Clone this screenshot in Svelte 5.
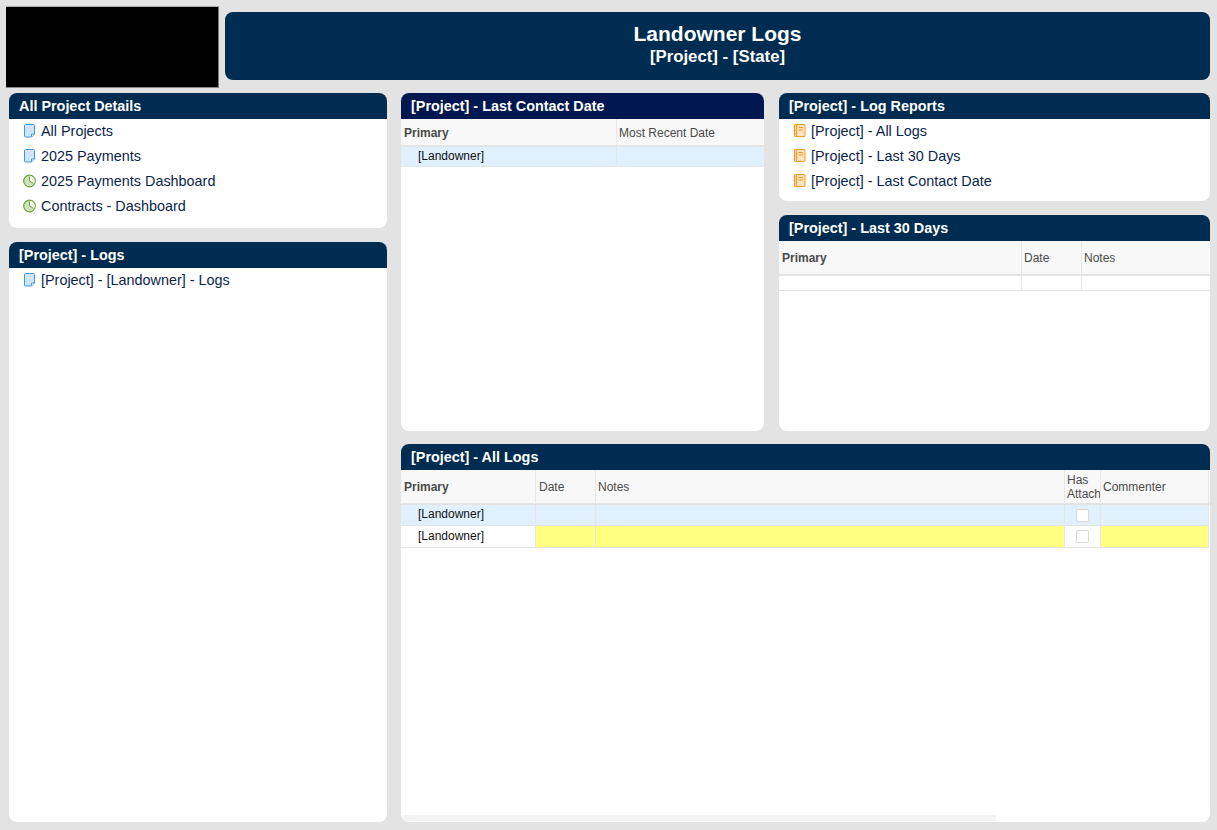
<script lang="ts">
	const details = [
		{ label: 'All Projects', icon: 'doc' },
		{ label: '2025 Payments', icon: 'doc' },
		{ label: '2025 Payments Dashboard', icon: 'pie' },
		{ label: 'Contracts - Dashboard', icon: 'pie' }
	];
	const logs = [{ label: '[Project] - [Landowner] - Logs', icon: 'doc' }];
	const reports = [
		{ label: '[Project] - All Logs', icon: 'book' },
		{ label: '[Project] - Last 30 Days', icon: 'book' },
		{ label: '[Project] - Last Contact Date', icon: 'book' }
	];
</script>

{#snippet icon(kind: string)}
	{#if kind === 'doc'}
		<svg class="ico" viewBox="0 0 14 14" width="14" height="14">
			<path d="M2.5 0.5h8a1 1 0 0 1 1 1v8.500l-3 3h-6a1 1 0 0 1-1-1v-10.500a1 1 0 0 1 1-1z" fill="#cfe6fa" stroke="#3f98de" />
			<path d="M8.500 12.500v-2.500h3" fill="#fff" stroke="#3f98de" />
		</svg>
	{:else if kind === 'pie'}
		<svg class="ico" viewBox="0 0 14 14" width="14" height="14">
			<circle cx="6.500" cy="7" r="5.800" fill="#cfe2bb" stroke="#6ea13a" stroke-width="1.200" />
			<path d="M6.500 7V1.800A5.200 5.200 0 0 1 11 9.600z" fill="#f3f8ec" />
			<path d="M6.500 2.500V7l3.800 2.200" fill="none" stroke="#6ea13a" />
		</svg>
	{:else}
		<svg class="ico" viewBox="0 0 14 14" width="14" height="14">
			<rect x="1.500" y="0.500" width="10.500" height="12" rx="0.500" fill="#fde3bf" stroke="#f59b25" />
			<path d="M3.500 0.500v12M0.500 3h2M0.500 6.500h2M0.500 10h2M5.500 3.500h4.500M5.500 6h4.500" fill="none" stroke="#f59b25" />
		</svg>
	{/if}
{/snippet}

{#snippet links(items: { label: string; icon: string }[])}
	<ul class="links">
		{#each items as item}
			<li>{@render icon(item.icon)}<span>{item.label}</span></li>
		{/each}
	</ul>
{/snippet}

<div class="page">
	<div class="top">
		<div class="logo"></div>
		<header class="banner">
			<h1>Landowner Logs</h1>
			<h2>[Project] - [State]</h2>
		</header>
	</div>

	<div class="main">
		<div class="left">
			<section class="panel details">
				<h3>All Project Details</h3>
				{@render links(details)}
			</section>
			<section class="panel fill">
				<h3>[Project] - Logs</h3>
				{@render links(logs)}
			</section>
		</div>

		<div class="right">
			<section class="panel contact">
				<h3 class="navy">[Project] - Last Contact Date</h3>
				<table class="contact-grid">
					<colgroup><col style="width:216px" /><col /></colgroup>
					<thead>
						<tr class="h28"><th class="primary">Primary</th><th>Most Recent Date</th></tr>
					</thead>
					<tbody>
						<tr class="sel"><td class="owner">[Landowner]</td><td></td></tr>
					</tbody>
				</table>
			</section>

			<div class="stack">
				<section class="panel reports">
					<h3>[Project] - Log Reports</h3>
					{@render links(reports)}
				</section>
				<section class="panel fill">
					<h3>[Project] - Last 30 Days</h3>
					<table class="days-grid">
						<colgroup><col style="width:243px" /><col style="width:60px" /><col /></colgroup>
						<thead>
							<tr class="h35"><th class="primary">Primary</th><th>Date</th><th>Notes</th></tr>
						</thead>
						<tbody>
							<tr class="blank"><td></td><td></td><td></td></tr>
						</tbody>
					</table>
				</section>
			</div>

			<section class="panel all-logs">
				<h3>[Project] - All Logs</h3>
				<table class="logs-grid">
					<colgroup>
						<col style="width:135px" /><col style="width:60px" /><col style="width:469px" /><col style="width:36px" /><col style="width:108px" /><col />
					</colgroup>
					<thead>
						<tr class="h35">
							<th class="primary">Primary</th><th class="date">Date</th><th>Notes</th><th>Has Attach</th><th>Commenter</th><th></th>
						</tr>
					</thead>
					<tbody>
						<tr class="sel r21">
							<td class="owner">[Landowner]</td><td></td><td></td><td class="check"><span class="box"></span></td><td></td><td class="none"></td>
						</tr>
						<tr class="r22">
							<td class="owner">[Landowner]</td><td class="warn"></td><td class="warn"></td><td class="check"><span class="box"></span></td><td class="warn"></td><td class="none"></td>
						</tr>
					</tbody>
				</table>
				<div class="scrollbar"></div>
			</section>
		</div>
	</div>
</div>

<style>
	:global(body) {
		background: #e3e3e3;
		font-family: 'Liberation Sans', Arial, sans-serif;
	}
	.page {
		height: 830px;
		box-sizing: border-box;
		padding: 6px 7px 8px 6px;
		display: flex;
		flex-direction: column;
		gap: 5px;
		overflow: hidden;
	}
	.top {
		display: flex;
		gap: 6px;
		height: 82px;
		flex-shrink: 0;
	}
	.logo {
		width: 213px;
		box-sizing: border-box;
		background: #000;
		border-top: 1px solid #aaa;
		border-right: 1px solid #777;
		border-bottom: 1px solid #888;
	}
	.banner {
		flex: 1;
		margin: 6px 0 8px;
		background: #002c51;
		border-radius: 8px;
		color: #fff;
		text-align: center;
		padding-top: 10px;
		box-sizing: border-box;
	}
	h1 {
		margin: 0;
		font-size: 21px;
		line-height: 24px;
		font-weight: 700;
	}
	h2 {
		margin: 1px 0 0;
		font-size: 16.800px;
		line-height: 19px;
		font-weight: 700;
	}
	.main {
		flex: 1;
		min-height: 0;
		display: flex;
		gap: 14px;
		padding-left: 3px;
	}
	.left {
		width: 378px;
		display: flex;
		flex-direction: column;
		gap: 14px;
		flex-shrink: 0;
	}
	.right {
		flex: 1;
		min-width: 0;
		display: grid;
		grid-template-columns: 363px 1fr;
		grid-template-rows: 338px 1fr;
		column-gap: 15px;
		row-gap: 13px;
	}
	.stack {
		display: flex;
		flex-direction: column;
		gap: 14px;
		min-height: 0;
	}
	.panel {
		background: #fff;
		border-radius: 8px;
		overflow: hidden;
	}
	.details {
		height: 135px;
		flex-shrink: 0;
	}
	.reports {
		height: 108px;
		flex-shrink: 0;
	}
	.fill {
		flex: 1;
		min-height: 0;
	}
	.all-logs {
		grid-column: 1 / 3;
		position: relative;
	}
	h3 {
		margin: 0;
		height: 26px;
		padding-left: 10px;
		background: #002c51;
		color: #fff;
		font-size: 14.400px;
		line-height: 26px;
		font-weight: 700;
	}
	h3.navy {
		background: #00174f;
	}
	.links {
		list-style: none;
		margin: -1px 0 0;
		padding: 0 0 0 14px;
	}
	.links li {
		height: 25px;
		display: flex;
		align-items: center;
		gap: 4px;
		font-size: 14.400px;
		color: #0b1f4b;
	}
	.ico {
		flex-shrink: 0;
	}
	table {
		border-collapse: separate;
		border-spacing: 0;
		table-layout: fixed;
		width: 100%;
		font-size: 12px;
	}
	th {
		box-sizing: border-box;
		background: #f8f8f8;
		color: #4a4a4a;
		font-weight: 400;
		text-align: left;
		padding: 0 0 0 2px;
		line-height: 14px;
		border-right: 1px solid #e6e6e6;
		border-bottom: 2px solid #e4e4e4;
		overflow: hidden;
	}
	th:last-child {
		border-right: 0;
	}
	th.primary {
		font-weight: 700;
		padding-left: 3px;
	}
	th.date {
		padding-left: 3px;
	}
	td {
		box-sizing: border-box;
		padding: 0;
		border-right: 1px solid #e6e6e6;
		border-bottom: 1px solid #e4e4e4;
		color: #111;
	}
	td:last-child {
		border-right: 0;
	}
	td.owner {
		padding: 0 0 2px 17px;
	}
	.h28 th {
		height: 28px;
		padding-top: 2px;
	}
	.h35 th {
		height: 35px;
	}
	.sel td {
		background: #e0f0fd;
		height: 20px;
	}
	.r21 td {
		height: 21px;
	}
	.r22 td {
		height: 22px;
		background: #fff;
	}
	.r22 td.warn {
		background: #ffff80;
	}
	.blank td {
		height: 15px;
	}
	td.none {
		background: #fff !important;
		border: 0;
	}
	td.check {
		text-align: center;
		vertical-align: middle;
		font-size: 0;
	}
	.box {
		display: inline-block;
		width: 13px;
		height: 13px;
		box-sizing: border-box;
		background: #fff;
		border: 1px solid #d8d8d8;
		border-radius: 2px;
	}
	.scrollbar {
		position: absolute;
		left: 2px;
		bottom: 1px;
		width: 593px;
		height: 6px;
		background: #f3f3f3;
		border-radius: 2px;
	}
</style>
